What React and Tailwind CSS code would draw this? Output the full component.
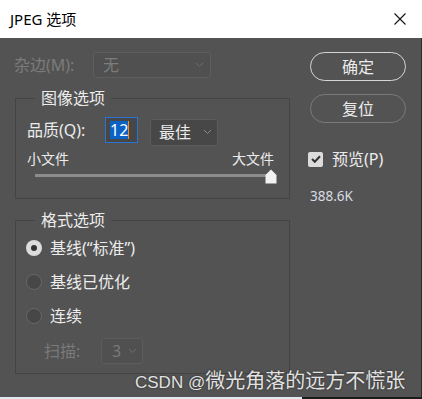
import React from 'react';

const font = { fontFamily: '"Noto Sans", "Noto Sans CJK SC", sans-serif' };

const Chevron = ({ color = '#8a8a8a' }) => (
  <svg width="9" height="6" viewBox="0 0 9 6" fill="none">
    <path d="M1 1l3.5 3.5L8 1" stroke={color} strokeWidth="1" />
  </svg>
);

const Radio = ({ checked }) =>
  checked ? (
    <span className="flex h-[16px] w-[16px] items-center justify-center rounded-full bg-[#dcdcdc]">
      <span className="h-[6px] w-[6px] rounded-full bg-[#333]" />
    </span>
  ) : (
    <span className="h-[16px] w-[16px] rounded-full border border-[#676767] bg-[#474747]" />
  );

const App = () => {
  return (
    <div className="relative flex h-[399px] w-[422px] flex-col overflow-hidden bg-[#535353] text-[#ececec]" style={font}>
      {/* title bar */}
      <div className="flex h-[38px] items-center justify-between bg-white pl-[10px] pr-[16px] text-black">
        <span className="text-[15px]">JPEG 选项</span>
        <svg width="12" height="12" viewBox="0 0 12 12">
          <path d="M0.5 0.5l11 11M11.5 0.5l-11 11" stroke="#111" strokeWidth="1.1" />
        </svg>
      </div>

      <div className="flex flex-1 border-r border-[#2b2b2b]">
        {/* left column */}
        <div className="w-[290px] pl-[14px] pt-[14px]">
          <div className="flex h-[26px] items-center text-[16px] text-[#7c7c7c]">
            <span className="w-[79px]">杂边(M):</span>
            <div className="flex h-[26px] w-[118px] items-center justify-between rounded-[3px] border border-[#5e5e5e] bg-[#505050] pl-[9px] pr-[6px]">
              <span>无</span>
              <Chevron color="#6e6e6e" />
            </div>
          </div>

          <fieldset className="ml-[1px] mt-[10px] h-[111px] w-[275px] border border-[#444]">
            <legend className="ml-[19px] px-[6px] text-[16px] leading-[20px]">图像选项</legend>
            <div className="mt-[9px] flex h-[26px] items-center pl-[11px]">
              <span className="w-[78px] text-[16px]">品质(Q):</span>
              <div className="flex h-[26px] w-[33px] items-center border border-[#2a74d6] bg-[#474747] pl-[4px]">
                <span className="bg-[#0b62c4] text-[16px] leading-[18px] text-white">12</span>
                <span className="h-[18px] w-[1px] bg-[#f08a24]" />
              </div>
              <div className="ml-[12px] mt-[4px] flex h-[27px] w-[68px] items-center justify-between rounded-[3px] border border-[#5c5c5c] bg-[#474747] pl-[8px] pr-[5px]">
                <span className="text-[16px]">最佳</span>
                <Chevron />
              </div>
            </div>
            <div className="mt-[7px] flex justify-between pl-[11px] pr-[15px] text-[14px] leading-[18px]">
              <span>小文件</span>
              <span>大文件</span>
            </div>
            <div className="relative ml-[19px] mt-[6px] h-[3px] w-[236px] bg-[#8c8c8c]">
              <svg className="absolute right-[-6px] top-[-5px]" width="12" height="15" viewBox="0 0 12 15">
                <path d="M6 0.5L11.5 6V14.5H0.5V6Z" fill="#f2f2f2" />
              </svg>
            </div>
          </fieldset>

          <fieldset className="ml-[1px] mt-[11px] h-[164px] w-[275px] border border-[#444]">
            <legend className="ml-[19px] px-[6px] text-[16px] leading-[20px]">格式选项</legend>
            <div className="flex flex-col gap-[16px] pl-[10px] pt-[9px] text-[16px]">
              <div className="flex h-[18px] items-center gap-[8px]">
                <Radio checked />
                <span>基线(“标准”)</span>
              </div>
              <div className="flex h-[18px] items-center gap-[8px]">
                <Radio />
                <span>基线已优化</span>
              </div>
              <div className="flex h-[18px] items-center gap-[8px]">
                <Radio />
                <span>连续</span>
              </div>
            </div>
            <div className="mt-[13px] flex items-center pl-[28px] text-[16px] text-[#7a7a7a]">
              <span className="w-[57px]">扫描:</span>
              <div className="flex h-[26px] w-[42px] items-center justify-between rounded-[3px] border border-[#5c5c5c] bg-[#505050] pl-[10px] pr-[5px]">
                <span>3</span>
                <Chevron color="#6e6e6e" />
              </div>
            </div>
          </fieldset>
        </div>

        {/* right column */}
        <div className="flex flex-col pl-[20px] pt-[14px]">
          <div className="flex h-[29px] w-[96px] items-center justify-center rounded-full border-[1.5px] border-[#d6d6d6] text-[16px]">
            确定
          </div>
          <div className="mt-[13px] flex h-[29px] w-[96px] items-center justify-center rounded-full border border-[#7a7a7a] text-[16px]">
            复位
          </div>
          <div className="-ml-[2px] mt-[24px] flex items-center gap-[9px]">
            <span className="flex h-[15px] w-[15px] items-center justify-center rounded-[2px] bg-[#dcdcdc]">
              <svg width="10" height="8" viewBox="0 0 10 8">
                <path d="M1 4l2.8 2.8L9 1.3" stroke="#333" strokeWidth="2" fill="none" />
              </svg>
            </span>
            <span className="text-[16px]">预览(P)</span>
          </div>
          <span className="mt-[15px] text-[13.5px] text-[#d6dce2]">388.6K</span>
        </div>
      </div>

      <div className="flex h-[2px]">
        <div className="w-[302px] bg-[#dfe9ef]" />
        <div className="flex-1 bg-[#1c1c1c]" />
      </div>

      {/* watermark */}
      <span className="absolute left-[135px] top-[367px] flex items-baseline whitespace-nowrap leading-[26px] text-[#e2e2e2] [text-shadow:0_0_2px_#222]">
        <span className="text-[17px]" style={{ fontFamily: '"Liberation Sans", sans-serif' }}>CSDN @</span>
        <span className="text-[20px]" style={{ fontFamily: '"Noto Sans CJK SC", sans-serif' }}>微光角落的远方不慌张</span>
      </span>
    </div>
  );
};

export default App;
